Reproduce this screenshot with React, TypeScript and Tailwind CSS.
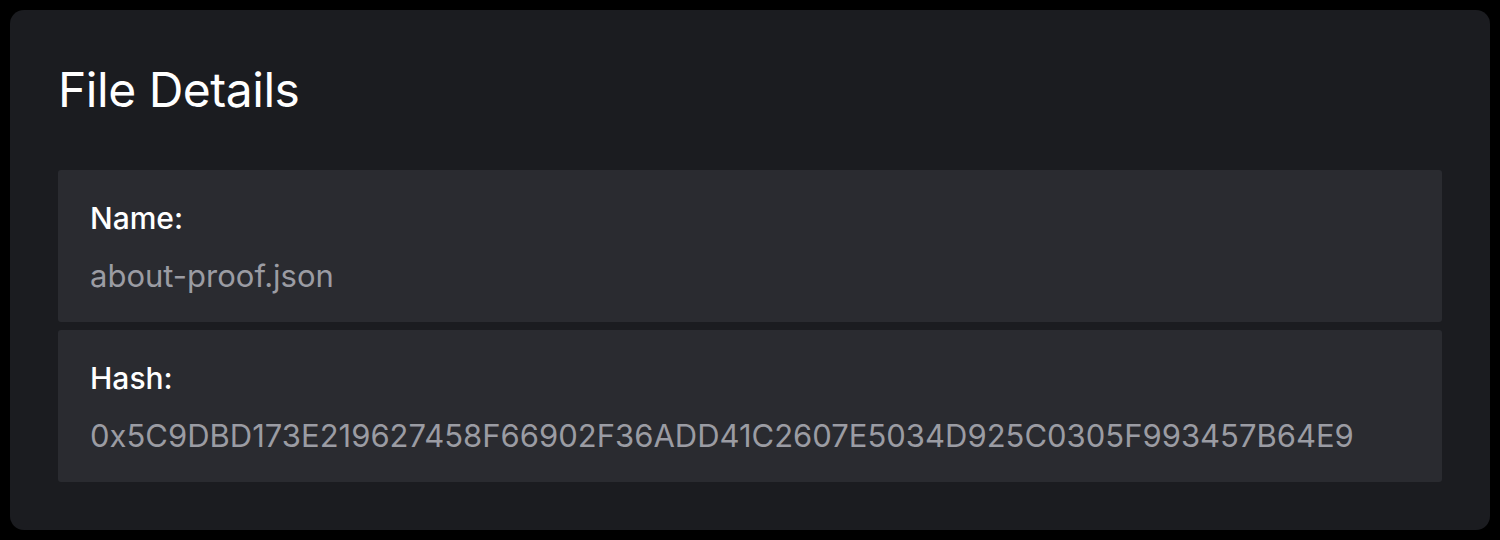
export default function App() {
  const rows = [
    { label: 'Name:', value: 'about-proof.json' },
    { label: 'Hash:', value: '0x5C9DBD173E219627458F66902F36ADD41C2607E5034D925C0305F993457B64E9' },
  ];

  return (
    <div className="h-[540px] w-[1500px] bg-black p-[10px] font-['Inter',sans-serif]">
      <div className="flex h-full flex-col rounded-[14px] bg-[#1b1c20] px-12 pt-[52px]">
        <h1 className="text-[48px] leading-[56px] font-normal tracking-[-0.01em] text-white">File Details</h1>
        <div className="mt-[52px] flex flex-col gap-2">
          {rows.map((row) => (
            <div key={row.label} className="flex h-[152px] flex-col rounded-[3px] bg-[#2a2b30] px-8 pt-[30px]">
              <div className="text-[30px] leading-[36px] font-medium text-white">{row.label}</div>
              <div className="mt-[21px] text-[31px] leading-[38px] text-[#9b9ca3]">{row.value}</div>
            </div>
          ))}
        </div>
      </div>
    </div>
  );
}
